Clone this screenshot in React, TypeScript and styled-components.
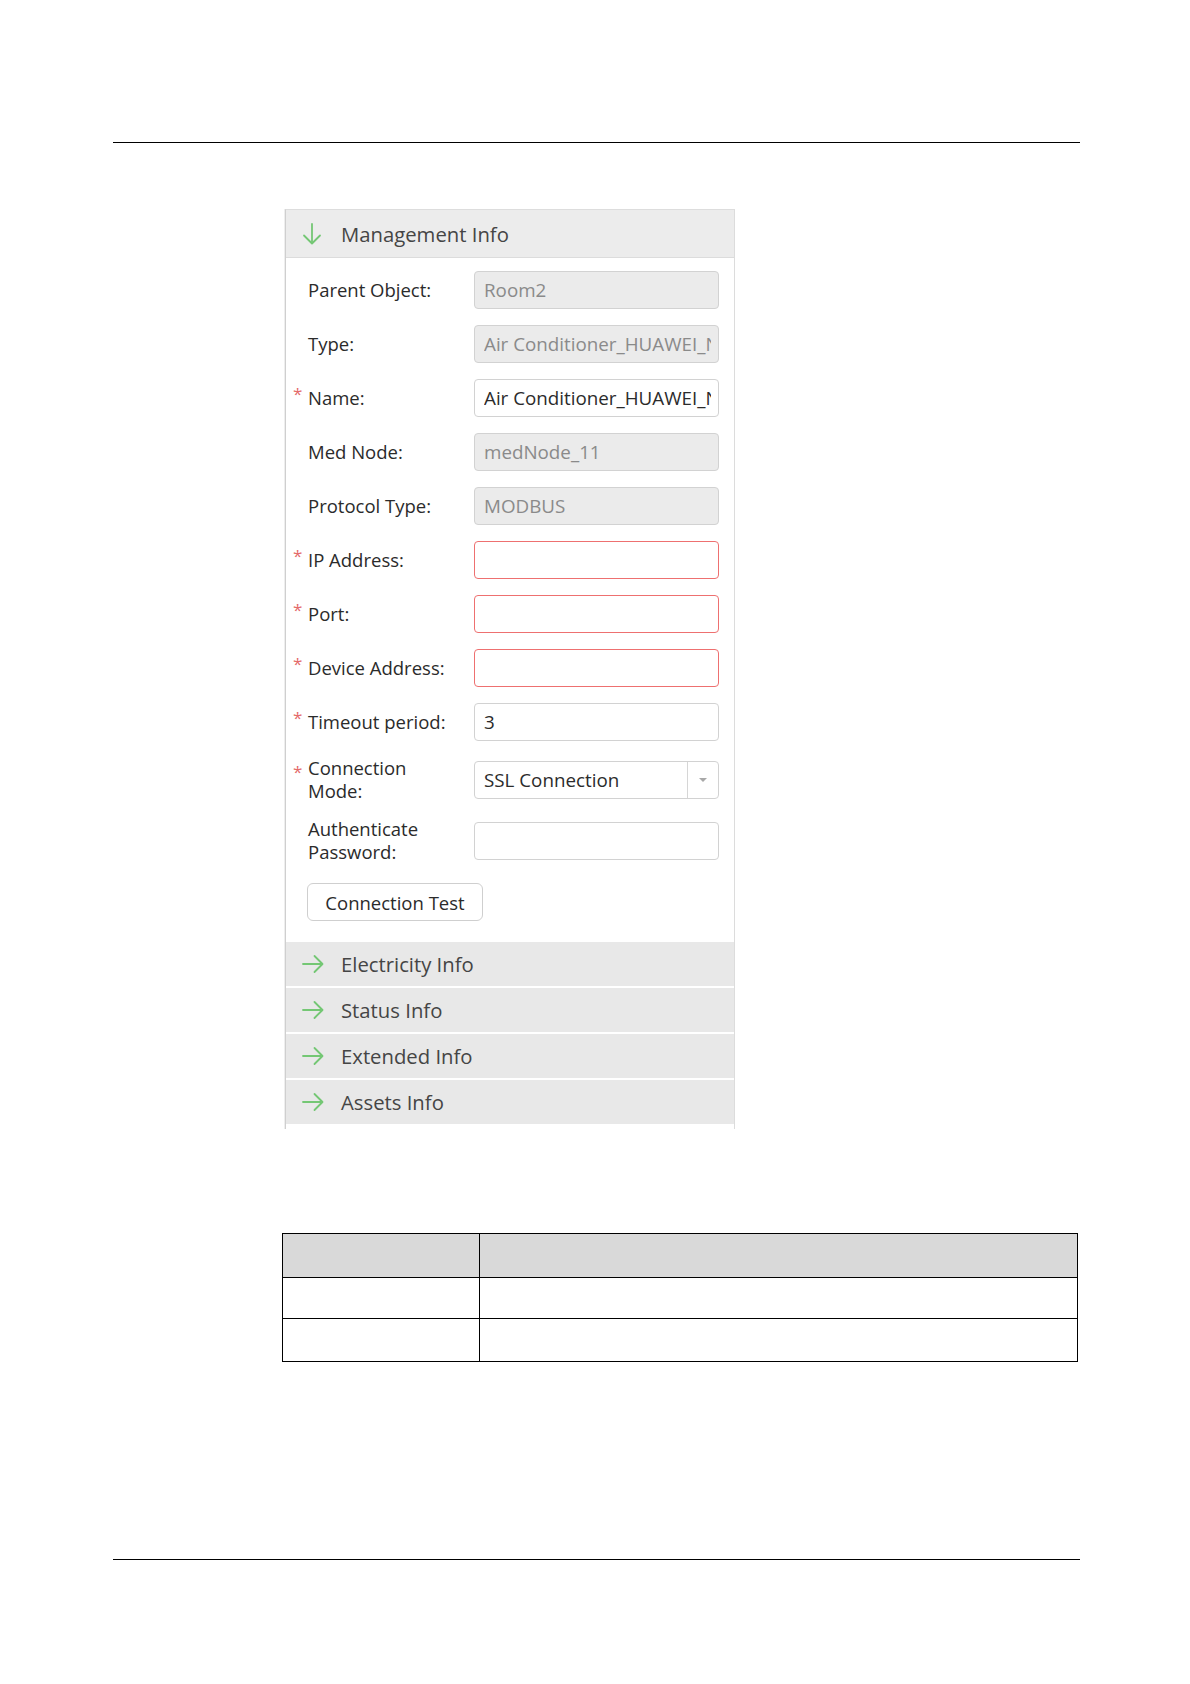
import React from 'react';
import styled, { createGlobalStyle } from 'styled-components';

const GlobalStyle = createGlobalStyle`
  html, body {
    margin: 0;
    padding: 0;
    background: #ffffff;
  }
  body {
    font-family: "Open Sans", "Noto Sans", Lato, sans-serif;
    color: #2b2b2b;
  }
`;

const Page = styled.div`
  width: 967px;
  margin-left: 113px;
  padding-top: 142px;
  padding-bottom: 124px;
`;

const Rule = styled.div<{ $gap?: number }>`
  border-top: 1.5px solid #000000;
  margin-top: ${p => p.$gap ?? 0}px;
`;

const Panel = styled.div`
  width: 448px;
  margin: 66px 0 0 172px;
  border-left: 1px solid #cfcfcf;
  border-right: 1px solid #dcdcdc;
  border-top: 1px solid #dddddd;
  padding-bottom: 3px;
  box-shadow: -1px 0 0 #eeeeee;
`;

const SectionHeader = styled.div<{ $open?: boolean }>`
  display: flex;
  align-items: center;
  height: ${p => (p.$open ? 47 : 44)}px;
  background: ${p => (p.$open ? '#ececec' : '#e8e8e8')};
  border-bottom: ${p => (p.$open ? '1px solid #dcdcdc' : 'none')};
  margin-bottom: ${p => (p.$open ? 0 : 2)}px;
  padding-left: 15px;
  font-size: 20.3px;
  color: #454545;
  & svg {
    flex: none;
    margin-right: ${p => (p.$open ? 18 : 16)}px;
  }
`;

const Form = styled.div`
  display: flex;
  flex-direction: column;
  gap: 16px;
  padding: 13px 15px 0 7px;
`;

const Row = styled.div`
  display: flex;
  align-items: center;
`;

const Star = styled.span`
  width: 15px;
  flex: none;
  align-self: flex-start;
  color: #e46a6a;
  font-size: 17px;
  line-height: 22px;
  padding-top: 4px;
`;

const Label = styled.div`
  width: 166px;
  flex: none;
  font-size: 18.5px;
  line-height: 22.5px;
  color: #2b2b2b;
`;

const Field = styled.div<{ $readOnly?: boolean; $error?: boolean }>`
  box-sizing: border-box;
  width: 246px;
  height: 38px;
  display: flex;
  align-items: center;
  padding-left: 9px;
  border: ${p => (p.$error ? '1.5px solid #ee7070' : '1px solid #d2d2d2')};
  border-radius: 4px;
  background: ${p => (p.$readOnly ? '#ebebeb' : '#ffffff')};
  color: ${p => (p.$readOnly ? '#8a8a8a' : '#2b2b2b')};
  font-size: 18.8px;
  white-space: nowrap;
  overflow: hidden;
`;

const FieldText = styled.span`
  display: block;
  overflow: hidden;
  width: 227px;
`;

const SelectValue = styled.span`
  flex: 1;
`;

const SelectToggle = styled.div`
  width: 30px;
  height: 100%;
  border-left: 1px solid #d6d6d6;
  display: flex;
  align-items: center;
  justify-content: center;
`;

const Caret = styled.span`
  width: 0;
  height: 0;
  border-left: 4px solid transparent;
  border-right: 4px solid transparent;
  border-top: 4px solid #a8a8a8;
`;

const TestButton = styled.button`
  margin: 20px 0 21px 21px;
  width: 176px;
  height: 38px;
  border: 1px solid #cfcfcf;
  border-radius: 6px;
  background: #ffffff;
  font-family: inherit;
  font-size: 18.5px;
  color: #2b2b2b;
  padding: 0;
`;

const Table = styled.table`
  width: 796px;
  margin: 104px 0 0 169px;
  border-collapse: collapse;
  & td, & th {
    border: 1.5px solid #000000;
    padding: 0;
  }
`;

const HeadCell = styled.th<{ $w?: number }>`
  background: #d9d9d9;
  height: 43px;
  width: ${p => (p.$w ? `${p.$w}px` : 'auto')};
`;

const Cell = styled.td<{ $h: number }>`
  height: ${p => p.$h}px;
`;

const ArrowDown = () => (
  <svg width="22" height="24" viewBox="0 0 22 24" fill="none" stroke="#74c774" strokeWidth="1.8" strokeLinecap="round" strokeLinejoin="round">
    <path d="M11 2 V21" />
    <path d="M3 13.5 L11 21.5 L19 13.5" />
  </svg>
);

const ArrowRight = () => (
  <svg width="24" height="22" viewBox="0 0 24 22" fill="none" stroke="#74c774" strokeWidth="1.8" strokeLinecap="round" strokeLinejoin="round">
    <path d="M2 11 H21" />
    <path d="M13.5 3 L21.5 11 L13.5 19" />
  </svg>
);

type FieldDef = {
  label: React.ReactNode;
  key: string;
  value?: string;
  required?: boolean;
  readOnly?: boolean;
  error?: boolean;
  select?: boolean;
};

const fields: FieldDef[] = [
  { key: 'parent', label: 'Parent Object:', value: 'Room2', readOnly: true },
  { key: 'type', label: 'Type:', value: 'Air Conditioner_HUAWEI_NetCol', readOnly: true },
  { key: 'name', label: 'Name:', value: 'Air Conditioner_HUAWEI_NetCol', required: true },
  { key: 'med', label: 'Med Node:', value: 'medNode_11', readOnly: true },
  { key: 'proto', label: 'Protocol Type:', value: 'MODBUS', readOnly: true },
  { key: 'ip', label: 'IP Address:', required: true, error: true },
  { key: 'port', label: 'Port:', required: true, error: true },
  { key: 'dev', label: 'Device Address:', required: true, error: true },
  { key: 'timeout', label: 'Timeout period:', value: '3', required: true },
  { key: 'mode', label: <>Connection<br />Mode:</>, value: 'SSL Connection', required: true, select: true },
  { key: 'auth', label: <>Authenticate<br />Password:</> },
];

const collapsed = ['Electricity Info', 'Status Info', 'Extended Info', 'Assets Info'];

const App: React.FC = () => (
  <>
    <GlobalStyle />
    <Page>
      <Rule />
      <Panel>
        <SectionHeader $open>
          <ArrowDown />
          Management Info
        </SectionHeader>
        <Form>
          {fields.map(f => (
            <Row key={f.key}>
              <Star>{f.required ? '*' : ''}</Star>
              <Label>{f.label}</Label>
              <Field $readOnly={f.readOnly} $error={f.error}>
                {f.select ? (
                  <>
                    <SelectValue>{f.value}</SelectValue>
                    <SelectToggle><Caret /></SelectToggle>
                  </>
                ) : (
                  <FieldText>{f.value}</FieldText>
                )}
              </Field>
            </Row>
          ))}
        </Form>
        <TestButton>Connection Test</TestButton>
        {collapsed.map(t => (
          <SectionHeader key={t}>
            <ArrowRight />
            {t}
          </SectionHeader>
        ))}
      </Panel>
      <Table>
        <thead>
          <tr>
            <HeadCell $w={196} />
            <HeadCell />
          </tr>
        </thead>
        <tbody>
          <tr>
            <Cell $h={40} />
            <Cell $h={40} />
          </tr>
          <tr>
            <Cell $h={42} />
            <Cell $h={42} />
          </tr>
        </tbody>
      </Table>
      <Rule $gap={197} />
    </Page>
  </>
);

export default App;
